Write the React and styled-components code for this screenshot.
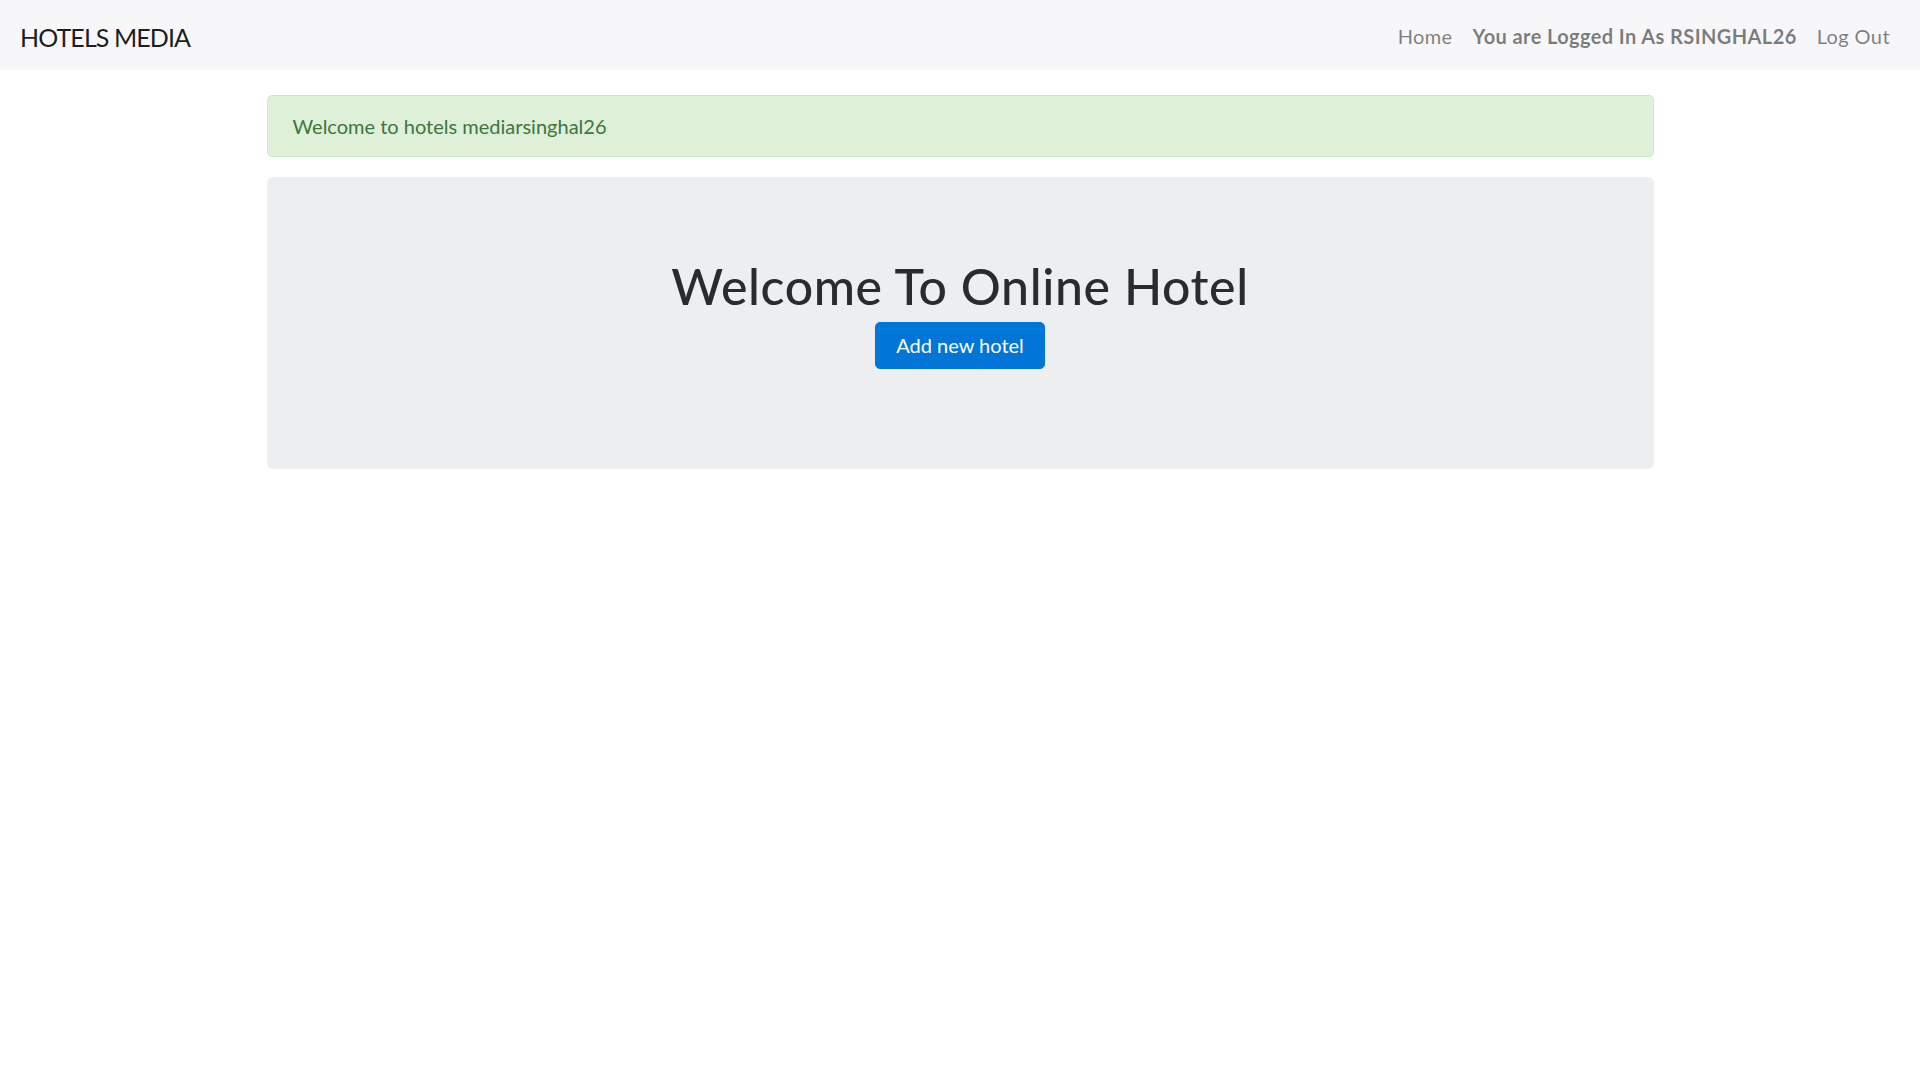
import React from "react";
import styled, { createGlobalStyle } from "styled-components";

const Global = createGlobalStyle`
  * { box-sizing: border-box; }
  html, body { margin: 0; padding: 0; background: #fff; }
  body {
    font-family: "Lato", "Open Sans", sans-serif;
    font-size: 20px;
    line-height: 1.5;
    color: #292b2c;
  }
`;

const Navbar = styled.nav`
  display: flex;
  align-items: center;
  justify-content: space-between;
  height: 70px;
  padding: 10px 20px;
  background: #f7f7f9;
`;

const Brand = styled.a`
  padding-top: 5px;
  font-size: 25px;
  line-height: 37.5px;
  letter-spacing: -0.9px;
  color: rgba(0, 0, 0, 0.9);
  text-decoration: none;
`;

const NavList = styled.ul`
  display: flex;
  align-items: center;
  list-style: none;
  margin: 0;
  padding: 0;
`;

const NavLink = styled.a`
  display: block;
  padding: 11px 10px 9px;
  font-size: 20px;
  line-height: 30px;
  letter-spacing: 0.4px;
  color: rgba(0, 0, 0, 0.5);
  font-weight: ${(p) => (p.$bold ? 700 : 400)};
  text-decoration: none;
`;

const Container = styled.main`
  width: 1387px;
  margin: 25px auto 0;
`;

const Alert = styled.div`
  padding: 15px 25px;
  margin-bottom: 20px;
  border: 1px solid #d0e9c6;
  border-radius: 5px;
  background: #dff0d8;
  color: #3c763d;
  font-size: 20px;
  line-height: 30px;
`;

const Jumbotron = styled.section`
  padding: 80px 40px 100px;
  background: #eceeef;
  border-radius: 6px;
  text-align: center;
`;

const Title = styled.h1`
  margin: 0 0 10px;
  padding-top: 3px;
  font-size: 50px;
  line-height: 52px;
  letter-spacing: 0.6px;
  font-weight: 500;
  color: #292b2c;
`;

const Button = styled.button`
  display: inline-block;
  padding: 10px 20px;
  font-family: inherit;
  font-size: 20px;
  line-height: 25px;
  color: #fff;
  background: #0275d8;
  border: 1px solid #0275d8;
  border-radius: 5px;
  cursor: pointer;
`;

export default function App() {
  return (
    <>
      <Global />
      <Navbar>
        <Brand href="#">HOTELS MEDIA</Brand>
        <NavList>
          <li><NavLink href="#">Home</NavLink></li>
          <li><NavLink $bold>You are Logged In As RSINGHAL26</NavLink></li>
          <li><NavLink href="#">Log Out</NavLink></li>
        </NavList>
      </Navbar>
      <Container>
        <Alert>Welcome to hotels mediarsinghal26</Alert>
        <Jumbotron>
          <Title>Welcome To Online Hotel</Title>
          <Button>Add new hotel</Button>
        </Jumbotron>
      </Container>
    </>
  );
}
